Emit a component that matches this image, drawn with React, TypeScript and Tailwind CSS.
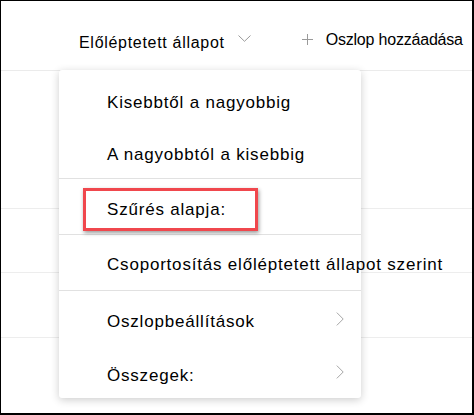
import React from "react"

function ChevronDown() {
  return (
    <svg width="13" height="7" viewBox="0 0 13 7" fill="none" className="mt-[5px] ml-[13px] shrink-0">
      <path d="M0.5 0.5 L6.5 6.3 L12.5 0.5" stroke="#9a9a9a" strokeWidth="1" />
    </svg>
  )
}

function Plus() {
  return (
    <svg width="11" height="11" viewBox="0 0 11 11" fill="none" className="mt-[4px] ml-[51px] shrink-0">
      <path d="M5.5 0 V11 M0 5.5 H11" stroke="#9a9a9a" strokeWidth="1" />
    </svg>
  )
}

function ChevronRight() {
  return (
    <svg width="8" height="14" viewBox="0 0 8 14" fill="none" className="ml-auto mr-[17px] mb-[7px] shrink-0">
      <path d="M0.8 0.6 L7.2 7 L0.8 13.4" stroke="#a6a6a6" strokeWidth="1" />
    </svg>
  )
}

const itemText = "text-[17px] leading-[24px] tracking-[0.8px] text-black whitespace-nowrap"

export default function App() {
  return (
    <div
      className="relative w-[474px] h-[415px] overflow-hidden bg-white border-l border-t border-r-2 border-b-2 border-black"
      style={{ fontFamily: '"Liberation Sans", Arial, sans-serif' }}
    >
      {/* Column header */}
      <div className="h-[70px] border-b border-[#ebebeb] pt-[29px] flex items-start">
        <span className="ml-[78px] mt-[3px] text-[16px] leading-[20px] tracking-[0.7px] text-black">
          Előléptetett állapot
        </span>
        <ChevronDown />
        <Plus />
        <span className="ml-[13px] text-[16px] leading-[20px] tracking-[-0.2px] text-black whitespace-nowrap">
          Oszlop hozzáadása
        </span>
      </div>

      {/* List rows behind the menu */}
      <div className="h-[138px] border-b border-[#ededed]" />
      <div className="h-[64px] border-b border-[#ededed]" />
      <div className="h-[65px] border-b border-[#ededed]" />

      {/* Context menu */}
      <div className="absolute left-[58px] top-[69px] w-[302px] h-[328px] bg-white rounded-[3px] shadow-[0_2px_8px_rgba(0,0,0,0.2)] pt-[8px] flex flex-col">
        <div className="h-[50px] flex items-center pl-[48px]">
          <span className={itemText}>Kisebbtől a nagyobbig</span>
        </div>
        <div className="h-[50px] pt-[4px] flex items-center pl-[48px]">
          <span className={itemText}>A nagyobbtól a kisebbig</span>
        </div>
        <div className="h-px bg-[#e1e1e1]" />
        <div className="relative h-[55px] pt-[7px] flex items-center pl-[48px]">
          <span className={itemText}>Szűrés alapja:</span>
          <div className="absolute left-[24px] top-[9px] w-[175px] h-[43px] border-[3px] border-[#f0474d] shadow-[1px_2px_4px_rgba(0,0,0,0.4)]" />
        </div>
        <div className="h-px bg-[#e1e1e1]" />
        <div className="h-[55px] pt-[4px] flex items-center pl-[48px]">
          <span className={itemText}>Csoportosítás előléptetett állapot szerint</span>
        </div>
        <div className="h-px bg-[#e1e1e1]" />
        <div className="h-[56px] pt-[6px] flex items-center pl-[48px]">
          <span className={itemText}>Oszlopbeállítások</span>
          <ChevronRight />
        </div>
        <div className="h-[51px] pt-[6px] flex items-center pl-[48px]">
          <span className={itemText}>Összegek:</span>
          <ChevronRight />
        </div>
      </div>
    </div>
  )
}
